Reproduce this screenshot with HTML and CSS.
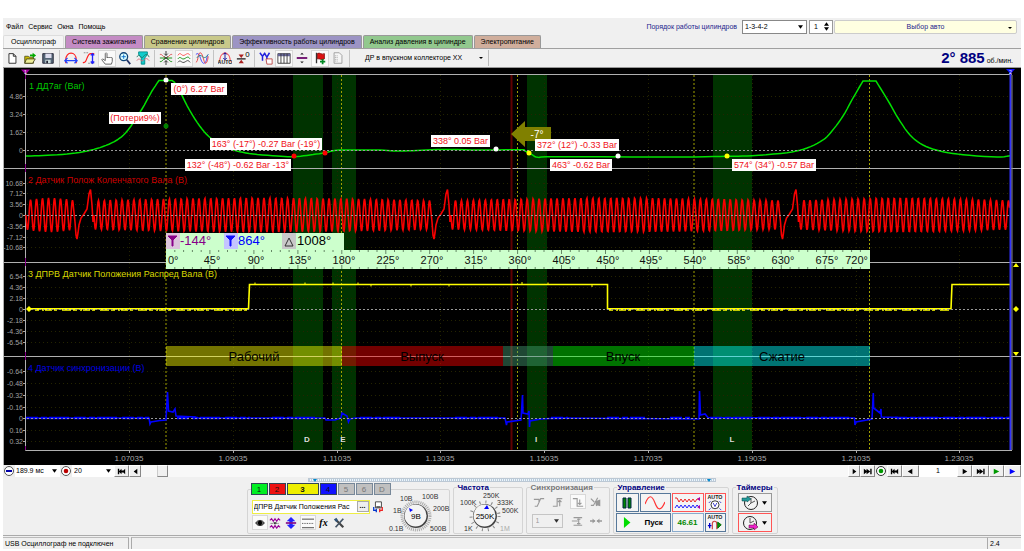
FILE: index.html
```html
<!DOCTYPE html>
<html lang="ru">
<head>
<meta charset="utf-8">
<title>USB Осциллограф</title>
<link rel="stylesheet" href="styles.css">
</head>
<body>
<main class="app">
  <header class="menubar">
    <nav class="menu"><a href="#">Файл</a><a href="#">Сервис</a><a href="#">Окна</a><a href="#">Помощь</a></nav>
    <label class="order-label" for="order">Порядок работы цилиндров</label>
    <select class="order combo" id="order"><option>1-3-4-2</option></select>
    <div class="spinner">
      <input class="spinner-value" type="text" value="1" aria-label="Номер цилиндра">
      <svg viewBox="0 0 6 10" class="spinner-arrows"><path d="M0 4 3 0 6 4zM0 6 3 10 6 6z"/></svg>
    </div>
    <button class="car">Выбор авто<svg viewBox="0 0 6 4" class="caret"><path d="M1 1h4L3 3z"/></svg></button>
  </header>

  <nav class="tabs">
    <button class="tab tab-active">Осциллограф</button>
    <button class="tab tab-pink">Система зажигания</button>
    <button class="tab tab-khaki">Сравнение цилиндров</button>
    <button class="tab tab-violet">Эффективность работы цилиндров</button>
    <button class="tab tab-green">Анализ давления в цилиндре</button>
    <button class="tab tab-tan">Электропитание</button>
  </nav>

  <div class="toolbar">
    <div class="tools">
      <button class="tool" aria-label="Новый"><svg viewBox="0 0 16 16"><path d="M4.500 3h5l3 3v8h-8zM9.500 3v3h3" fill="#fff" stroke="#222"/></svg></button>
      <button class="tool" aria-label="Открыть"><svg viewBox="0 0 16 16"><path d="M2 14V6h4l1 1h5v7z" fill="#cb0" stroke="#552"/><path d="M2 14l2-5h10l-3 5z" fill="#ee9" stroke="#442"/><path d="M8 4h3V2l4 3-4 3V6H8z" fill="#0a0"/></svg></button>
      <button class="tool" aria-label="Сохранить"><svg viewBox="0 0 16 16"><path d="M2 3h12v11H2z" fill="#567" stroke="#223"/><path d="M5 3h7v5H5z" fill="#dde"/><path d="M5 10h6v4H5z" fill="#cdd"/><path d="M6 11h2v3H6z" fill="#223"/></svg></button>
    </div>
    <div class="tools">
      <button class="tool" aria-label="Период"><svg viewBox="0 0 16 16" fill="none" stroke-width="1.400"><path d="M2 10C2 0 14 0 14 10v4M2 10v4" stroke="#f22"/><path d="M1 11h14M4 8l-3 3 3 3M12 8l3 3-3 3" stroke="#24f"/></svg></button>
      <button class="tool" aria-label="Амплитуда"><svg viewBox="0 0 16 16" fill="none"><path d="M1 13c5 2 4-10 9-10h4" stroke="#f22" stroke-width="1.400"/><path d="M2 2h6M7 14h7" stroke="#888" stroke-dasharray="2 1"/><path d="M12 3v11M10 5l2-2 2 2M10 12l2 2 2-2" stroke="#22f" stroke-width="1.500"/></svg></button>
      <button class="tool pressed" aria-label="Рука"><svg viewBox="0 0 16 16"><path d="M6 15l-4-5 1-1 3 2V3l1-1 1 1v5l1-1 1 1 1-1 1 1 1-1 1 1v4l-1 3z" fill="#fff" stroke="#555"/></svg></button>
      <button class="tool" aria-label="Масштаб"><svg viewBox="0 0 16 16"><circle cx="6.500" cy="6.500" r="4.500" fill="#dff" stroke="#147" stroke-width="1.500"/><path d="M4 6.500h5M6.500 4v5" stroke="#06c"/><path d="M10 10l4 5" stroke="#236" stroke-width="2"/></svg></button>
      <button class="tool" aria-label="Фильтр"><svg viewBox="0 0 16 16"><path d="M3 1h10v3l-3 4v7H6V8L3 4z" fill="#1cc" stroke="#088"/><path d="M1 7c3-6 5 3 7 0s5-5 7 0" fill="none" stroke="#276"/><path d="M1 11c3-5 5 2 7 0s4-4 7 0" fill="none" stroke="#d67"/></svg></button>
    </div>
    <div class="tools">
      <button class="tool" aria-label="Центр"><svg viewBox="0 0 16 16" fill="none"><path d="M1 4c3-1 4 4 7 4s4-5 7-4" stroke="#d44"/><path d="M1 8h14M1 12c3 1 4-4 7-4s4 5 7 4" stroke="#080"/><path d="M6 6l4 4M10 6l-4 4" stroke="#444"/><path d="M8 0v5M8 11v5M6 3l2 2 2-2M6 13l2-2 2 2" stroke="#222"/></svg></button>
      <button class="tool pressed" aria-label="Сигналы"><svg viewBox="0 0 16 16" fill="none"><path d="M1 5c3-5 4 1 7 0s4-4 7 0" stroke="#f44"/><path d="M1 9c3-4 4 1 7 0s4-4 7 0" stroke="#080"/><path d="M1 13c3-4 4 1 7 0s4-4 7 0" stroke="#333"/></svg></button>
      <button class="tool" aria-label="Наложение"><svg viewBox="0 0 16 16" fill="none"><path d="M1 4c5-5 5 10 9 10s3-9 5-10" stroke="#33f"/><path d="M1 13C4 12 3 2 6 2s4 12 6 12 3-6 3-8" stroke="#e33"/><path d="M2 8c6-9 7 6 13-4" stroke="#288"/></svg></button>
    </div>
    <div class="tools">
      <button class="tool" aria-label="Авто"><svg viewBox="0 0 16 16"><path d="M2 12C2-1 14-1 14 12" fill="none" stroke="#f22"/><path d="M8 2v8M6 4l2-2 2 2M6 8l2 2 2-2" fill="none" stroke="#009"/><text x="8" y="15" class="auto-text">AUTO</text></svg></button>
      <button class="tool" aria-label="Ноль"><svg viewBox="0 0 16 16"><path d="M1 9h10" stroke="#222" stroke-width="1.500"/><path d="M3 4h6L6 8zM3 14h6l-3-4z" fill="#a22"/><text x="13" y="7" class="zero-text">0</text></svg></button>
    </div>
    <div class="tools">
      <button class="tool" aria-label="Маркеры"><svg viewBox="0 0 16 16"><path d="M1 2l3 4v5M7 2L4 6M6 2l3 5v5M12 2L9 7" fill="none" stroke="#22d" stroke-width="1.700"/><path d="M8 9h7v6H9z" fill="#fff" stroke="#b44"/></svg></button>
      <button class="tool pressed" aria-label="Таблица"><svg viewBox="0 0 16 16"><path d="M1 3h14v11H1z" fill="#fff" stroke="#333"/><path d="M1 3h14v3H1z" fill="#669"/><path d="M4.500 3v11M8 3v11M11.500 3v11" stroke="#333"/></svg></button>
      <button class="tool" aria-label="Разделить"><svg viewBox="0 0 16 16"><path d="M2 8h12" stroke="#606" stroke-width="2"/><path d="M6 4l2-2 2 2zM6 12l2 2 2-2z" fill="#222"/></svg></button>
      <button class="tool pressed" aria-label="Флаг"><svg viewBox="0 0 16 16"><path d="M4 2v12" stroke="#333" stroke-width="1.500"/><path d="M5 3c3-2 4 2 8 0v6c-4 2-5-1-8 0z" fill="#d11" stroke="#811"/><path d="M11 9v6M8 12h6" stroke="#082" stroke-width="2"/></svg></button>
      <button class="tool" aria-label="Линейка"><svg viewBox="0 0 16 16"><path d="M3.500 2h6l3 3v9h-9z" fill="#f6f6f6" stroke="#999"/><path d="M5 5v8M7 5v8" stroke="#999" stroke-dasharray="1 1"/></svg></button>
    </div>
    <button class="preset"><span>ДР в впускном коллекторе XX</span><svg viewBox="0 0 6 4" class="caret"><path d="M1 1h4L3 3z"/></svg></button>
    <output class="rpm"><strong>2° 885</strong> об./мин.</output>
  </div>

  <svg class="scope" viewBox="3 68 1018 397" role="img" aria-label="Осциллограммы">
    <rect x="3" y="68" width="1018" height="397" fill="#000"/>
    <g class="bands">
      <rect x="293" y="75" width="30" height="375"/><rect x="332" y="75" width="24" height="375"/>
      <rect x="527" y="75" width="20" height="375"/><rect x="713" y="75" width="39" height="375"/>
    </g>
    <g id="grid"></g>
    <g class="cycle-lines"><path d="M166 75V450M341.500 75V450M517.500 75V450M694 75V450M869.500 75V450"/></g>
    <path class="frame" d="M25.500 74.500H1012M25.500 74V450.500H1012M3 168.500H1021M3 262.500H1021M3 356.500H1021M3.500 68V465"/>
    <path d="M25.500 75v4M25.500 164v8M25.500 258v8M25.500 352v8M25.500 446v4" stroke="#808"/>
    <path d="M511.500 75V450" stroke="#600000" stroke-width="2"/>
    <g class="titles">
      <text x="29" y="89" fill="#00c800">1 ДД7аг (Bar)</text>
      <text x="28" y="183" fill="#d00000">2 Датчик Полож Коленчатого Вала (В)</text>
      <text x="28" y="277" fill="#d8d800">3 ДПРВ Датчик Положения Распред Вала (В)</text>
      <text x="28" y="371" fill="#0000e0">4 Датчик синхронизации (В)</text>
    </g>
    <g id="traces"></g>
    <path d="M1010.500 70V450" stroke="#33f" stroke-width="2"/><path d="M1012 75V450" stroke="#888"/>
    <path d="M21 69.500h9l-4.500 5z" fill="#a000a0"/><text x="25.500" y="74" class="mark">1</text>
    <path d="M1006 69h9l-4.500 5z" fill="#11f"/><text x="1010.500" y="74" class="mark">2</text>
    <g fill="#ff0"><path d="M1013 267h6l-3-4zM1013 352h6l-3 4zM1016 306l3 3-3 3-3-3zM29 306l3 3-3 3-3-3z"/></g>
    <path d="M511 134l14-13v6h26v14h-26v6z" fill="#808000"/><text x="537" y="138" class="arrow-text">-7°</text>

    <g class="phases">
      <rect x="166" y="346" width="176" height="20" fill="#ff0"/><rect x="342" y="346" width="161" height="20" fill="#f00"/>
      <rect x="503" y="346" width="50" height="20" fill="#449e73"/><rect x="553" y="346" width="141" height="20" fill="#0f0"/>
      <rect x="694" y="346" width="176" height="20" fill="#0ff"/>
    </g>
    <g class="phase-names"><text x="254" y="361">Рабочий</text><text x="422" y="361">Выпуск</text><text x="623" y="361">Впуск</text><text x="782" y="361">Сжатие</text></g>
    <g class="valves"><text x="307" y="442">D</text><text x="343" y="442">E</text><text x="536" y="442">I</text><text x="732" y="442">L</text></g>

    <g class="deltas">
      <rect x="166" y="233" width="178" height="17" fill="#cfc"/>
      <rect x="166" y="233" width="14" height="16" fill="#dcc4dc"/><path d="M168 236h9l-4 4v6h-1v-6z" fill="#808" stroke="#808"/>
      <rect x="224" y="233" width="14" height="16" fill="#c4c4ff"/><path d="M226 236h9l-4 4v6h-1v-6z" fill="#11f" stroke="#11f"/>
      <rect x="282" y="233" width="14" height="16" fill="#c8c8c8"/><path d="M285 246h8l-4-8z" fill="none" stroke="#333"/>
      <text x="180" y="245" fill="#808">-144°</text><text x="238" y="245" fill="#00f">864°</text><text x="297" y="245">1008°</text>
    </g>
    <g id="ruler"></g>
    <g id="callouts"></g>
  </svg>

  <div class="navbar">
    <button class="nav-round" aria-label="Сжать"><svg viewBox="0 0 12 12"><circle cx="6" cy="6" r="4.500" fill="#fff" stroke="#555"/><path d="M3 6h6" stroke="#00a" stroke-width="2"/></svg></button>
    <select class="combo span-select" aria-label="Развёртка"><option>189.9 мс</option></select>
    <button class="nav-round" aria-label="Запись"><svg viewBox="0 0 12 12"><circle cx="6" cy="6" r="4.500" fill="#fff" stroke="#555"/><circle cx="6" cy="6" r="2.300" fill="#b00"/></svg></button>
    <select class="combo frames-select" aria-label="Кадры"><option>20</option></select>
    <button class="nav-btn" aria-label="В начало"><svg viewBox="0 0 12 12"><path d="M2 3h1.500v6H2zM6 3v6L3 6zM6 5h4v2H6zM10 3v6L7 6z"/></svg></button>
    <button class="nav-btn narrow" aria-label="Назад"><svg viewBox="0 0 12 12"><path d="M8 3v6L4 6z"/></svg></button>
    <div class="track"><div class="thumb"></div></div>
    <button class="nav-btn narrow" aria-label="Вперёд"><svg viewBox="0 0 12 12"><path d="M4 3v6l4-3z"/></svg></button>
    <button class="nav-btn" aria-label="В конец"><svg viewBox="0 0 12 12"><path d="M9 3h1.500v6H9zM2 3v6l4-3zM5 3v6l4-3z"/></svg></button>
    <button class="nav-round" aria-label="Кадр"><svg viewBox="0 0 12 12"><circle cx="6" cy="6" r="4.500" fill="#fff" stroke="#333"/><circle cx="6" cy="6" r="2.300" fill="#090"/></svg></button>
    <button class="nav-btn" aria-label="Первый кадр"><svg viewBox="0 0 12 12"><path d="M2 3h1.500v6H2zM6 3v6L3 6zM6 5h4v2H6zM10 3v6L7 6z"/></svg></button>
    <button class="nav-btn wide" aria-label="Предыдущий кадр"><svg viewBox="0 0 12 12"><path d="M8 3v6L3 6z"/></svg></button>
    <span class="frame-no">1</span>
    <button class="nav-btn" aria-label="Следующий кадр"><svg viewBox="0 0 12 12"><path d="M4 3v6l5-3z"/></svg></button>
    <button class="nav-btn wide" aria-label="Последний кадр"><svg viewBox="0 0 12 12"><path d="M9 3h1.500v6H9zM2 3v6l4-3zM5 3v6l4-3z"/></svg></button>
    <button class="nav-btn" aria-label="Воспроизвести"><svg viewBox="0 0 12 12"><path d="M3 3v6l6-3z" fill="#090"/></svg></button>
    <button class="nav-btn wide" aria-label="Быстро"><svg viewBox="0 0 12 12"><path d="M3 3v6l6-3z" fill="#00f"/></svg></button>
  </div>
  <div class="splitter"><svg viewBox="0 0 4 3"><path d="M0 0h4L2 3z"/></svg><svg viewBox="0 0 4 3"><path d="M0 0h4L2 3z"/></svg></div>

  <section class="panel">
    <fieldset class="group group-channels">
      <legend class="channels">
        <button class="ch ch1">1</button><button class="ch ch2">2</button><button class="ch ch3">3</button><button class="ch ch4">4</button><button class="ch off">5</button><button class="ch off">6</button><button class="ch off">D</button>
      </legend>
      <div class="channel-left">
        <div class="channel-row">
          <div class="channel-name"><input type="text" aria-label="Имя канала" value="ДПРВ Датчик Положения Рас"><button aria-label="Выбрать">...</button></div>
          <button class="mini" aria-label="Инверсия"><svg viewBox="0 0 14 14"><path d="M4 1h7v7H4z" fill="#fff" stroke="#333"/><path d="M5 6h5v2H5z" fill="#555"/><path d="M2 7v4h3M5 9v4" fill="none" stroke="#03c" stroke-width="1.500"/><path d="M12 7v4H9M9 9v4" fill="none" stroke="#e22" stroke-width="1.500"/></svg></button>
        </div>
        <div class="mini-row">
          <button class="mini pressed" aria-label="Видимость"><svg viewBox="0 0 14 14"><path d="M2 7c2-4 8-4 10 0-2 4-8 4-10 0z" fill="#666" stroke="#222"/><circle cx="7" cy="7" r="2.500"/></svg></button>
          <button class="mini" aria-label="Сигнал"><svg viewBox="0 0 14 14"><path d="M1 4l2-2 2 3 2-3 2 3 2-3 2 2M1 12l2-2 2 3 2-3 2 3 2-3 2 2" fill="none" stroke="#909" stroke-width="1.300"/><path d="M2 7.500h10" stroke="#333" stroke-dasharray="1 1"/><path d="M5 6h4L7 9z" fill="#333"/></svg></button>
          <button class="mini" aria-label="Сдвиг"><svg viewBox="0 0 14 14"><path d="M7 0l5 5H9v4h3l-5 5-5-5h3V5H2z" fill="#22f"/><path d="M1 7h12" stroke="#818" stroke-width="2"/></svg></button>
          <button class="mini pressed" aria-label="Линии"><svg viewBox="0 0 14 14"><path d="M0 2.500h14M0 12.500h14" stroke="#333"/><path d="M0 7.500h14" stroke="#333" stroke-dasharray="1 1"/></svg></button>
          <button class="mini fx" aria-label="Функция"><i>fx</i></button>
          <button class="mini" aria-label="Настройка"><svg viewBox="0 0 14 14"><path d="M3 3l9 9" stroke="#444" stroke-width="2.500"/><path d="M12 2l-9 10" stroke="#456" stroke-width="2"/><path d="M1 3l3-2 2 3-2 2z" fill="#357"/></svg></button>
        </div>
      </div>
      <svg class="knob knob-volt" viewBox="386 494 62 38">
        <circle cx="415" cy="516" r="14" class="knob-ticks"/><circle cx="415" cy="516" r="12" class="knob-shade"/><circle cx="414.500" cy="515.500" r="11" class="knob-face"/>
        <path d="M408 508l4 2-3 2z" fill="#00f"/><text x="415" y="519" class="knob-value">9В</text>
        <g class="knob-labels"><text x="388" y="531">0.1В</text><text x="392" y="513">1В</text><text x="399" y="501">10В</text><text x="421" y="499">100В</text><text x="432" y="511">200В</text><text x="429" y="531">500В</text></g>
      </svg>
    </fieldset>
    <fieldset class="group group-rate"><legend>Частота</legend>
      <svg class="knob" viewBox="453 492 66 40">
        <circle cx="484" cy="516" r="14" class="knob-ticks sparse"/><circle cx="484" cy="516" r="12" class="knob-shade"/><circle cx="483.500" cy="515.500" r="11" class="knob-face"/>
        <path d="M483 509l3-4 2 4z" fill="#00f"/><text x="484" y="519" class="knob-value">250K</text>
        <g class="knob-labels"><text x="463" y="531">1K</text><text x="459" y="505">100K</text><text x="482" y="498">250K</text><text x="496" y="505">333K</text><text x="501" y="513">500K</text><text x="499" y="531" fill="#aaa">1M</text></g>
      </svg>
    </fieldset>
    <fieldset class="group group-sync" disabled><legend>Синхронизация</legend>
      <div class="sync-grid">
        <button class="mini" aria-label="Спад"><svg viewBox="0 0 14 14"><path d="M2 12h3L9 3h4M1 4h6v4" fill="none" stroke="#999" stroke-width="1.300"/></svg></button>
        <button class="mini" aria-label="Фронт"><svg viewBox="0 0 14 14"><path d="M1 12h5V3h6M9 12V5M7 7l2-2 2 2" fill="none" stroke="#999" stroke-width="1.300"/></svg></button>
        <button class="mini pressed" aria-label="Срез"><svg viewBox="0 0 14 14"><path d="M1 3h5v9h7M9 4v5M7 8l2 2 2-2" fill="none" stroke="#999" stroke-width="1.300"/></svg></button>
        <button class="mini" aria-label="Вручную"><svg viewBox="0 0 14 14"><path d="M1 3l4 4M1 11h3l5-9" fill="none" stroke="#999" stroke-width="1.300"/><path d="M6 6l6-2v8l-3-1-2 1z" fill="#999"/></svg></button>
        <select class="combo sync-select" aria-label="Канал"><option>1</option></select>
        <button class="mini" aria-label="Уровень"><svg viewBox="0 0 14 14"><path d="M3 3h10M1 7h7M3 12h10M9 4v7M7 5h4M7 10h4" fill="none" stroke="#999" stroke-width="1.300"/></svg></button>
        <button class="mini" aria-label="Сход"><svg viewBox="0 0 14 14"><path d="M0 7h6M8 7h6" stroke="#999" stroke-width="1.500"/><path d="M3 4v6l3-3zM11 4v6L8 7z" fill="#999"/></svg></button>
      </div>
    </fieldset>
    <fieldset class="group group-control"><legend>Управление</legend>
      <div class="control-grid">
        <button class="ctl" aria-label="Пауза"><svg viewBox="0 0 20 16"><path d="M6 3h3v10H6zM11 3h3v10h-3z" fill="#080" stroke="#024"/></svg></button>
        <button class="ctl" aria-label="Синус"><svg viewBox="0 0 20 16"><path d="M0 9C4-1 7 0 10 8s6 8 10-1" fill="none" stroke="#f33" stroke-width="1.200"/></svg></button>
        <button class="ctl hot" aria-label="Запись"><svg viewBox="0 0 28 16"><path d="M1 3h2l2 4 2-3 2 3 2-3 2 3 2-3 2 3 2-3 2 3 2-3h3" fill="none" stroke="#e22"/><path d="M1 13l2-3 2 3 2-3 2 3 2-3 2 3 2-3 2 3 2-3 2 3 2-3 3 3" fill="none" stroke="#22f"/><path d="M26 2v4l-3-2zM26 10v4l-3-2z" fill="#a0a"/></svg></button>
        <button class="ctl hot" aria-label="Авто масштаб"><svg viewBox="0 0 18 18"><text x="9" y="5" class="auto-text">AUTO</text><circle cx="9" cy="11" r="4.500" fill="#fff" stroke="#222"/><path d="M4 7l-2 2M14 7l2 2M4 15l-2 2M14 15l2 2M7 9l2 4 2-4" fill="none" stroke="#33c"/></svg></button>
        <button class="ctl start"><svg viewBox="0 0 10 14"><path d="M1 1v12l7-6z" fill="#0d0"/></svg><span>Пуск</span></button>
        <output class="ctl fps">46.61</output>
        <button class="ctl" aria-label="Авто запуск"><svg viewBox="0 0 18 18"><text x="9" y="5" class="auto-text">AUTO</text><path d="M6 16V10c0-4 5-4 5 0v6" fill="none" stroke="#c44" stroke-width="1.300"/><path d="M1 12h4M3 9v6" stroke="#00c" stroke-width="1.500"/><path d="M12 8v7l4-4z" fill="#090" stroke="#060"/></svg></button>
      </div>
    </fieldset>
    <fieldset class="group group-timers"><legend>Таймеры</legend>
      <div class="timer-stack">
        <button class="timer" aria-label="Таймер старта"><svg viewBox="0 0 18 16"><circle cx="10" cy="8" r="6.500" fill="#f4f4f4" stroke="#222"/><path d="M10 3v5l4-2M10 8l-3 3" fill="none" stroke="#555"/><path d="M1 3h5V1l4 3-4 3V6H1z" fill="#299" stroke="#044" stroke-width=".500"/></svg><svg viewBox="0 0 6 4" class="caret"><path d="M0 0h6L3 4z"/></svg></button>
        <button class="timer hot" aria-label="Таймер остановки"><svg viewBox="0 0 18 16"><circle cx="9" cy="8" r="6.500" fill="#f4f4f4" stroke="#222"/><path d="M9 3v5l4-2" fill="none" stroke="#555"/><path d="M8 10h5V8l4 4-4 3v-2H8z" fill="#e2c" stroke="#503" stroke-width=".500"/></svg><svg viewBox="0 0 6 4" class="caret"><path d="M0 0h6L3 4z"/></svg></button>
      </div>
    </fieldset>
  </section>

  <footer class="status"><span class="status-text">USB Осциллограф не подключен</span><span class="status-fill"></span><span class="status-version">2.4</span></footer>
</main>
<script src="scope.js"></script>
</body>
</html>
```
FILE: styles.css
```css
* { box-sizing: border-box; }
body { margin: 18px 3px 0; background: #fff; font: 7px/10px "Liberation Sans", Arial, sans-serif; color: #000; }
button, input, select { font: inherit; color: inherit; margin: 0; padding: 0; border: 0; border-radius: 0; background: none; }
button svg { display: block; }
a { color: inherit; text-decoration: none; }
.app { background: #f0f0f0; }

.menubar { display: flex; align-items: center; height: 17px; padding-right: 4px; color: #1c1c8c; }
.menu { display: flex; gap: 5px; flex: 1; padding-left: 3px; color: #000; }
.combo { appearance: none; background: #fff url("data:image/svg+xml,%3Csvg xmlns='http://www.w3.org/2000/svg' viewBox='0 0 6 4'%3E%3Cpath d='M0 0h6L3 4z'/%3E%3C/svg%3E") no-repeat right 3px center / 5px 4px; }
.order { width: 65px; height: 14px; margin: 0 2px 0 5px; padding-left: 2px; border: 1px solid #888; color: #000; }
.spinner { display: flex; align-items: center; width: 24px; height: 14px; margin-right: 1px; border: 1px solid #999; background: #fff; }
.spinner-value { width: 14px; padding-left: 4px; color: #000; }
.spinner-arrows { width: 5px; height: 9px; }
.car { position: relative; width: 183px; height: 14px; border: 1px solid #ccc; border-radius: 2px; background: #ffffe1; }
.caret { width: 6px; height: 4px; }
.car .caret { position: absolute; right: 3px; top: 5px; }

.tabs { display: flex; gap: 1px; height: 14px; border-bottom: 1px solid #a0a0a0; }
.tab { padding: 0 6px; border: 1px solid #999; border-bottom: 0; border-radius: 2px 2px 0 0; white-space: nowrap; }
.tab-active { padding: 0 7px; background: #f4f4f4; border-color: #ddd; }
.tab-pink { background: #c48cc4; }
.tab-khaki { background: #c8c88a; }
.tab-violet { background: #9c94c4; }
.tab-green { background: #92c88e; }
.tab-tan { background: #d0ae9c; }

.toolbar { display: flex; align-items: center; height: 19px; border-bottom: 1px solid #999; }
.tools { display: flex; padding-right: 2px; margin-right: 2px; border-right: 1px solid #c4c4c4; }
.tool { width: 18px; height: 17px; padding: 0 1px; border: 1px solid transparent; }
.tool svg { width: 14px; height: 14px; }
.tool.pressed, .mini.pressed { border: 1px solid #d8d8d8; background: #fafafa; }
.auto-text { font: bold 6px "Liberation Sans", sans-serif; text-anchor: middle; fill: #222; }
.zero-text { font: 9px "Liberation Sans", sans-serif; text-anchor: middle; }
.preset { display: flex; align-items: center; justify-content: space-between; height: 16px; width: 137px; padding: 0 4px 0 13px; border-right: 1px solid #bbb; white-space: nowrap; }
.rpm { margin-left: auto; padding-right: 8px; white-space: nowrap; }
.rpm strong { font: bold 15px/16px "Liberation Sans", sans-serif; color: #000080; }

.scope { display: block; width: 100%; height: auto; }
.bands rect { fill: #003300; }
.cycle-lines { fill: none; stroke: #a0a000; stroke-dasharray: 2 2; }
.frame { fill: none; stroke: #b0b0b0; }
.titles { font-size: 9px; }
.axis { font-size: 7px; fill: #a0a0a0; text-anchor: end; }
.time { font-size: 8px; fill: #a8a8a8; text-anchor: middle; }
.grid-line { stroke: #242400; stroke-dasharray: 1 3; }
.zero-line { stroke: #999; stroke-dasharray: 2 2; }
.mark { font-size: 5px; fill: #fff; text-anchor: middle; }
.arrow-text { font-size: 10px; fill: #fff; text-anchor: middle; }
.phases rect { opacity: .45; }
.phase-names { font-size: 13px; text-anchor: middle; }
.valves { font-size: 8px; font-weight: bold; fill: #ddd; text-anchor: middle; }
.deltas text { font-size: 13px; }
.ruler-text { font-size: 11px; fill: #111; }
.callout rect { fill: #fff; }
.callout text { font-size: 9px; fill: #f01020; text-anchor: middle; }

.navbar { display: flex; height: 12px; background: #fff; }
.nav-round { width: 12px; height: 12px; background: #eee; }
.nav-btn { display: flex; align-items: center; justify-content: center; width: 15px; background: #f0f0f0; border: 1px solid; border-color: #fff #888 #888 #fff; }
.nav-btn svg { width: 11px; height: 11px; flex: none; }
.narrow { width: 12px; }
.wide { width: 17px; }
.span-select { width: 45px; padding-left: 1px; }
.frames-select { width: 42px; padding-left: 2px; }
.track { flex: 1; padding-left: 16px; background: #f8f8f8; }
.thumb { width: 11px; height: 12px; background: #f0f0f0; border: 1px solid; border-color: #fff #888 #888 #ccc; }
.frame-no { width: 38px; text-align: center; line-height: 12px; }
.splitter { display: flex; justify-content: space-between; width: 40%; height: 4px; margin: 1px auto 0; padding: 0 4px; border: 1px solid #bcc8d4; background: repeating-linear-gradient(90deg, #b8ccdc 0 1px, #eef4fa 1px 2px); }
.splitter svg { width: 4px; height: 3px; fill: #08c; }

.panel { display: flex; justify-content: center; gap: 3px; padding: 1px 0; border-bottom: 1px solid #aaa; }
.group { position: relative; min-width: 0; height: 51px; margin: 0; padding: 0; border: 1px solid #d4d4d4; border-radius: 2px; }
.group legend { margin-left: 3px; padding: 0 1px; font-weight: bold; font-size: 8px; line-height: 9px; height: 9px; color: #000080; }
.group-channels { width: 203px; }
.group-rate { width: 70px; }
.group-sync { width: 84px; color: #888; }
.group-sync legend { color: #777; }
.group-control { width: 116px; }
.group-timers { width: 46px; }
.group .channels { display: flex; gap: 1px; height: 13px; padding: 0; font-weight: normal; color: #111; }
.ch { width: 17px; height: 12px; border: 1px solid #345; }
.ch1 { background: #0e2; }
.ch2 { background: #e11; }
.ch3 { width: 32px; background: #ee0; font-weight: bold; }
.ch4 { background: #11f; }
.off { background: #c0c0c0; border-color: #789; color: #777; }
.channel-left { width: 138px; padding: 3px 0 0 4px; }
.channel-row { display: flex; align-items: center; gap: 1px; }
.channel-name { display: flex; width: 118px; height: 14px; border: 1px solid #ee4; background: #fff; }
.channel-name input { width: 104px; padding-left: 1px; }
.channel-name button { width: 12px; height: 11px; border: 1px solid #aaa; background: #eee; line-height: 6px; font-weight: bold; }
.mini { width: 16px; height: 15px; padding: 0 1px; }
.mini svg { width: 12px; height: 12px; }
.mini-row { display: flex; margin-top: 1px; }
.fx { font: bold 10px "Liberation Serif", serif; }
.knob { display: block; width: 66px; height: 40px; overflow: visible; }
.knob-volt { position: absolute; right: 0; bottom: 1px; width: 62px; height: 38px; }
.knob-ticks { fill: none; stroke: #aaa; stroke-width: 3; stroke-dasharray: 1 1; }
.sparse { stroke: #888; stroke-dasharray: 1 5; }
.knob-shade { fill: #444; }
.knob-face { fill: #f4f4f4; }
.knob-value { font-size: 8px; text-anchor: middle; }
.knob-labels { font-size: 7px; fill: #333; }
.sync-grid { display: grid; grid-template-columns: repeat(4, 16px); gap: 4px 3px; padding: 2px 0 0 5px; }
.sync-select { grid-column: span 2; width: 31px; height: 14px; margin-top: 1px; padding-left: 3px; border: 1px solid #bbb; background-color: #f0f0f0; opacity: .8; }
.control-grid { display: grid; grid-template-columns: 23px 31px 32px 21px; grid-auto-rows: 19px; gap: 1px 1px; padding: 1px 0 0 2px; }
.ctl { display: flex; align-items: center; justify-content: center; border: 1px solid #57789a; background: #f4f4f4; }
.ctl svg { height: 16px; max-width: 100%; }
.hot { border-color: #f55; }
.start, .fps { font-size: 8px; font-weight: bold; }
.start { grid-column: span 2; gap: 12px; }
.start svg { height: 13px; }
.fps { color: #080; border-color: #8ac; }
.timer-stack { display: grid; gap: 1px; padding: 1px 5px 0; }
.timer { display: flex; align-items: center; justify-content: space-between; height: 19px; padding: 0 4px 0 2px; border: 1px solid #999; background: #f2f2f2; }
.timer.hot { border-color: #f55; }
.timer svg { width: 18px; height: 16px; }
.timer svg.caret { width: 5px; height: 4px; }

.status { display: flex; height: 13px; padding-top: 1px; line-height: 11px; white-space: nowrap; }
.status span { border-top: 1px solid #bbb; }
.status-text { width: 126px; padding-left: 2px; border-right: 1px solid #aaa; }
.status-fill { flex: 1; margin-left: 2px; border-left: 1px solid #aaa; }
.status-version { width: 34px; padding-left: 2px; border-left: 1px solid #aaa; }
```
FILE: scope.js
```js
const NS = 'http://www.w3.org/2000/svg';
const add = (parent, tag, attrs, text) => {
  const el = document.createElementNS(NS, tag);
  for (const k in attrs) el.setAttribute(k, attrs[k]);
  if (text) el.textContent = text;
  parent.append(el);
  return el;
};
const $ = id => document.getElementById(id);

// Value scales: [label, y]
const scales = [
  ['4.86', 96], ['3.24', 114], ['1.62', 132], ['0', 150],
  ['10.68', 183], ['7.12', 193], ['3.56', 204], ['0', 215], ['-3.56', 226], ['-7.12', 237], ['-10.68', 247],
  ['6.54', 276], ['4.36', 287], ['2.18', 298], ['0', 309], ['-2.18', 320], ['-4.36', 331], ['-6.54', 342],
  ['-0.64', 371], ['-0.48', 383], ['-0.32', 395], ['-0.16', 407], ['0', 418], ['0.16', 430], ['0.32', 441]
];
const grid = $('grid');
for (const [label, y] of scales) {
  add(grid, 'text', { x: 23, y: y + 3, class: 'axis' }, label);
  add(grid, 'path', { d: `M23 ${y + .5}h3`, stroke: '#aaa' });
  if (label !== '0') add(grid, 'path', { d: `M27 ${y + .5}H1010`, class: 'grid-line' });
}
for (let i = 0; i < 9; i++) {
  const x = Math.round(129 + i * 103.8);
  add(grid, 'path', { d: `M${x + .5} 75V450`, class: 'grid-line' });
  add(grid, 'path', { d: `M${x + .5} 450v3`, stroke: '#aaa' });
  add(grid, 'text', { x, y: 461, class: 'time' }, (1.07035 + i * .02).toFixed(5));
}

const traces = $('traces');
const line = (pts, stroke, width) =>
  add(traces, 'path', { d: 'M' + pts.map(p => p[0].toFixed(1) + ' ' + p[1].toFixed(1)).join('L'), fill: 'none', stroke, 'stroke-width': width });
const smooth = pts => {
  const out = [];
  for (let i = 0; i < pts.length - 1; i++) {
    const p = [pts[i - 1] || pts[i], pts[i], pts[i + 1], pts[i + 2] || pts[i + 1]];
    for (let t = 0; t < 1; t += .2) {
      out.push([0, 1].map(k => .5 * (2 * p[1][k] + (p[2][k] - p[0][k]) * t
        + (2 * p[0][k] - 5 * p[1][k] + 4 * p[2][k] - p[3][k]) * t * t
        + (3 * p[1][k] - p[0][k] - 3 * p[2][k] + p[3][k]) * t * t * t)));
    }
  }
  out.push(pts[pts.length - 1]);
  return out;
};

// Cylinder pressure
const rise = [[26, 156], [43, 155.5], [67, 154], [87, 151], [103, 146.5], [117, 140], [128, 130], [142, 109], [152, 91], [159, 80.5]];
const mid = [[172, 80.5], [177, 86], [190, 111], [202, 129], [213, 140], [225, 147], [237, 151], [253, 154], [277, 156], [294, 156.7], [310, 155], [325, 152.7], [337, 150.3], [350, 150], [380, 150], [397, 151], [417, 150.5], [443, 149.5], [480, 150], [520, 149.7], [525, 151], [532, 154.7], [538, 157.3], [557, 156.7], [680, 157], [727, 156.3], [752, 155.7], [787, 152.7], [807, 148], [823, 140], [832, 131], [843, 116], [853, 98], [863, 81]];
const fall = [[876, 81], [890, 104], [898, 118], [910, 135], [923, 145], [940, 151], [963, 154.7], [997, 157], [1010, 155.7]];
line([...smooth(rise), ...smooth(mid), ...smooth(fall)], '#00e000', 1.5);

// Crankshaft sensor with missing-tooth gaps
const crank = [];
const gaps = [77, 434, 782.5];
const run = (x0, x1) => {
  const n = Math.round((x1 - x0) / 5.95);
  for (let x = x0; x < x1; x += .5) {
    const u = (x - x0) / (x1 - x0);
    crank.push([x, 215 - (14.5 + 2.5 * Math.sin(Math.PI * u)) * Math.sin(2 * Math.PI * n * u + Math.PI)]);
  }
};
run(26, 74);
gaps.forEach((g, i) => {
  crank.push([g - 2, 222], [g - 1, 235], [g, 239], [g + 1, 233], [g + 2, 225], [g + 4, 218], [g + 7, 214], [g + 10, 209], [g + 12, 194], [g + 13.5, 189.5], [g + 15, 205], [g + 16, 222]);
  run(g + 17, i < 2 ? gaps[i + 1] - 3 : 1010);
});
line(crank, '#f80000', 1.6);

// Camshaft sensor
line([[27, 308.7], [248.5, 308.7], [249.5, 284.5], [607.5, 284.5], [607.5, 308.7], [951, 308.7], [952, 284.5], [1010, 284.5]], '#ffff00', 1.6);
add(traces, 'path', { d: 'M35 309.5H249M609 309.5H950', stroke: '#ff0', 'stroke-width': 2.6, 'stroke-dasharray': '4 3 2 1 7 2 3 5 9 2' });
add(traces, 'path', { d: 'M255 284V282.500M305 284v-1.500M333 284v-1.500M358 284v-1.500M371 285v1.500M411 285v1.500M449 285v1.500M522 284v-2M548 284v-1.500M592 285v2', stroke: '#ff0' });

// Ignition synchronisation
line([[26, 418], [149, 418], [150, 424], [151, 422], [160, 420.5], [166, 420], [167.5, 392], [168.5, 411], [173, 412], [175, 409], [176, 416], [195, 417], [197, 418], [325, 418], [326, 420], [335, 420], [341, 418], [342, 413], [347, 416], [348.5, 422], [350, 419], [355, 418], [505, 418], [506.5, 425], [507, 422], [521, 420], [522.5, 395], [523, 413], [528, 414], [529, 411], [529.5, 427], [530, 421], [541, 419], [560, 418], [699, 419], [699.5, 391], [700.5, 415], [705, 414], [708, 417.5], [854.5, 418], [855, 425], [856, 422], [872, 419], [873.3, 393], [873.6, 408], [880, 413], [881, 409], [881.3, 417], [898, 417.5], [1010, 418]], '#0000ff', 1.6);
add(traces, 'path', { d: 'M26 418H149M177 418H250M272 418H320M360 418H400M455 418H503M551 418H568M607 418H645M670 418H690M710 418H853M895 418H1010', stroke: '#0000ff', 'stroke-width': 2.4, 'stroke-dasharray': '12 3 6 2 20 5' });
for (const y of [150, 215, 309, 418]) add(traces, 'path', { d: `M27 ${y + .5}H1010`, class: 'zero-line' });

// Crank angle ruler
const ruler = $('ruler');
add(ruler, 'rect', { x: 166, y: 250, width: 704, height: 19, fill: '#ccffcc' });
let ticks = '';
for (let i = 1; i < 80; i++) {
  const x = (166 + i * 8.79).toFixed(1), h = i % 5 ? 2 : 4;
  ticks += `M${x} 250v${h}M${x} 269v-${h}`;
}
add(ruler, 'path', { d: ticks, stroke: '#668866' });
for (let i = 0; i <= 16; i++) {
  const anchor = i === 0 ? 'start' : i === 16 ? 'end' : 'middle';
  const x = i === 0 ? 168 : i === 16 ? 868 : Math.round(168 + i * 43.95);
  add(ruler, 'text', { x, y: 264, class: 'ruler-text', 'text-anchor': anchor }, i * 45 + '°');
}

// Callouts: [x, y, width, text]
const callouts = $('callouts');
for (const [x, y, w, text] of [
  [171, 83, 56, '(0°) 6.27 Bar'], [109, 112, 52, '(Потери9%)'],
  [210, 138, 112, '163° (-17°) -0.27 Bar (-19°)'], [185, 159, 106, '132° (-48°) -0.62 Bar -13°'],
  [431, 135, 59, '338° 0.05 Bar'], [535, 139, 84, '372° (12°) -0.33 Bar'],
  [550, 159, 62, '463° -0.62 Bar'], [732, 159, 84, '574° (34°) -0.57 Bar']
]) {
  const g = add(callouts, 'g', { class: 'callout' });
  add(g, 'rect', { x, y, width: w, height: 12 });
  add(g, 'text', { x: x + w / 2, y: y + 9 }, text);
}
for (const [cx, cy, fill] of [[166, 80, '#fff'], [166, 126, '#008000'], [294, 156, '#f00'], [325, 153, '#f00'], [496, 149, '#fff'], [618, 156, '#fff'], [529, 153, '#ff0'], [727, 156, '#ff0']])
  add(callouts, 'circle', { cx, cy, r: 2.5, fill });
```
